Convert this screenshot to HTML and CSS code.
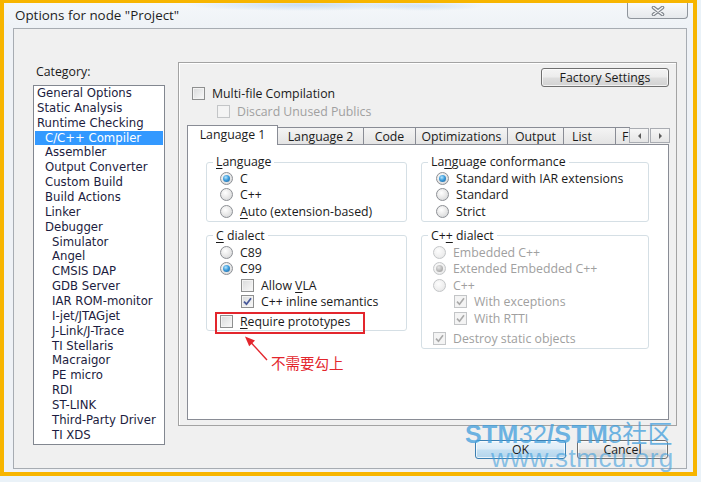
FILE: index.html
```html
<!DOCTYPE html>
<html lang="en">
<head>
  <meta charset="UTF-8" />
  <meta name="viewport" content="width=device-width, initial-scale=1.0"/>
  <title>Options for node "Project"</title>
  <link rel="stylesheet" href="styles.css">
</head>
<body>
  <div class="screen">
    <div class="titlebar">
      <span class="title">Options for node "Project"</span>
      <span class="close-btn">
        <svg width="14" height="10" viewBox="0 0 14 10">
          <path d="M2.5 1.5 L11.5 8.5 M11.5 1.5 L2.5 8.5" stroke="#7f858c" stroke-width="3.6" stroke-linecap="round"/>
          <path d="M2.5 1.5 L11.5 8.5 M11.5 1.5 L2.5 8.5" stroke="#f5f6f7" stroke-width="1.5" stroke-linecap="round"/>
        </svg>
      </span>
    </div>

    <div class="client">
      <!-- category tree -->
      <div class="category">
        <div class="category-label">Category:</div>
        <ul class="category-list">
          <li>General Options</li>
          <li>Static Analysis</li>
          <li>Runtime Checking</li>
          <li class="lvl1 selected">C/C++ Compiler</li>
          <li class="lvl1">Assembler</li>
          <li class="lvl1">Output Converter</li>
          <li class="lvl1">Custom Build</li>
          <li class="lvl1">Build Actions</li>
          <li class="lvl1">Linker</li>
          <li class="lvl1">Debugger</li>
          <li class="lvl2">Simulator</li>
          <li class="lvl2">Angel</li>
          <li class="lvl2">CMSIS DAP</li>
          <li class="lvl2">GDB Server</li>
          <li class="lvl2">IAR ROM-monitor</li>
          <li class="lvl2">I-jet/JTAGjet</li>
          <li class="lvl2">J-Link/J-Trace</li>
          <li class="lvl2">TI Stellaris</li>
          <li class="lvl2">Macraigor</li>
          <li class="lvl2">PE micro</li>
          <li class="lvl2">RDI</li>
          <li class="lvl2">ST-LINK</li>
          <li class="lvl2">Third-Party Driver</li>
          <li class="lvl2">TI XDS</li>
        </ul>
      </div>

      <div class="main">
        <div class="settings-panel">
          <div class="panel-top">
            <span class="btn factory">Factory Settings</span>
          </div>
          <label class="opt multi"><span class="check"></span>Multi-file Compilation</label>
          <label class="opt discard disabled"><span class="check"></span>Discard Unused Publics</label>

          <div class="tabs">
            <span class="tab active w-lang1">Language 1</span>
            <span class="tab w-lang2">Language 2</span>
            <span class="tab w-code">Code</span>
            <span class="tab w-opt">Optimizations</span>
            <span class="tab w-out">Output</span>
            <span class="tab w-list">List</span>
            <span class="tab w-more">F</span>
            <span class="tab-arrows">
              <span class="arrow"><i class="tri left"></i></span>
              <span class="arrow"><i class="tri right"></i></span>
            </span>
          </div>

          <div class="tab-page">
            <div class="col col-left">
              <fieldset class="group g-lang">
                <legend><u>L</u>anguage</legend>
                <label class="opt"><span class="radio on"></span>C</label>
                <label class="opt"><span class="radio"></span>C++</label>
                <label class="opt"><span class="radio"></span><span><u>A</u>uto (extension-based)</span></label>
              </fieldset>

              <fieldset class="group g-cdialect">
                <legend><u>C</u> dialect</legend>
                <label class="opt"><span class="radio"></span>C89</label>
                <label class="opt"><span class="radio on"></span>C99</label>
                <label class="opt ind"><span class="check"></span><span>Allow <u>V</u>LA</span></label>
                <label class="opt ind"><span class="check">
                  <svg width="9" height="9" viewBox="0 0 9 9"><path d="M1 4.6 L3.5 7.2 L8 1.3" fill="none" stroke="#48599a" stroke-width="1.8"/></svg>
                </span>C++ inline semantics</label>
                <label class="opt last"><span class="check"></span><span><u>R</u>equire prototypes</span></label>
                <div class="mark-box"></div>
              </fieldset>
            </div>

            <div class="col col-right">
              <fieldset class="group g-conf">
                <legend>La<u>n</u>guage conformance</legend>
                <label class="opt"><span class="radio on"></span>Standard with IAR extensions</label>
                <label class="opt"><span class="radio"></span>Standard</label>
                <label class="opt"><span class="radio"></span>Strict</label>
              </fieldset>

              <fieldset class="group g-cpp">
                <legend>C+<u>+</u> dialect</legend>
                <label class="opt disabled"><span class="radio"></span>Embedded C++</label>
                <label class="opt disabled"><span class="radio on"></span>Extended Embedded C++</label>
                <label class="opt disabled"><span class="radio"></span>C++</label>
                <label class="opt disabled ind"><span class="check">
                  <svg width="9" height="9" viewBox="0 0 9 9"><path d="M1 4.6 L3.5 7.2 L8 1.3" fill="none" stroke="#a9a9a9" stroke-width="1.6"/></svg>
                </span>With exceptions</label>
                <label class="opt disabled ind"><span class="check">
                  <svg width="9" height="9" viewBox="0 0 9 9"><path d="M1 4.6 L3.5 7.2 L8 1.3" fill="none" stroke="#a9a9a9" stroke-width="1.6"/></svg>
                </span>With RTTI</label>
                <label class="opt disabled last"><span class="check">
                  <svg width="9" height="9" viewBox="0 0 9 9"><path d="M1 4.6 L3.5 7.2 L8 1.3" fill="none" stroke="#a9a9a9" stroke-width="1.6"/></svg>
                </span>Destroy static objects</label>
              </fieldset>
            </div>

            <!-- red hint under the prototypes option -->
            <div class="hint">
              <svg class="hint-arrow" width="32" height="30" viewBox="0 0 32 30">
                <path d="M11 9.5 L27 27" stroke="#e3262d" stroke-width="1.4"/>
                <path d="M5 3.5 L15 7.6 L9.2 13.2 Z" fill="#e3262d"/>
              </svg>
              <span class="hint-text">不需要勾上</span>
            </div>
          </div>
        </div>

        <div class="dialog-buttons">
          <span class="btn default">OK</span>
          <span class="btn">Cancel</span>
        </div>
      </div>
    </div>

    <div class="watermark">
      <div class="wm-name"><b>STM</b>32<b>/STM</b>8社区</div>
      <div class="wm-url">www.stmcu.org</div>
    </div>
  </div>
</body>
</html>
```

FILE: styles.css
```css
* {
  box-sizing: border-box;
}

body {
  margin: 0;
  background: #eaf2f8;
  font-family: "Open Sans", "Noto Sans", sans-serif;
  font-size: 12.3px;
  color: #1a1a1a;
}

u {
  text-decoration-thickness: 1px;
  text-underline-offset: 2px;
}

/* screenshot frame + window chrome */
.screen {
  position: relative;
  width: 697px;
  height: 476px;
  border: 4px solid #f7b500;
  border-top-width: 3px;
  background: #eff2f6;
  display: flex;
  flex-direction: column;
  overflow: hidden;
}

.titlebar {
  height: 25px;
  flex: none;
  display: flex;
  align-items: flex-start;
  background:
    radial-gradient(ellipse 120px 6px at 300px 2px, rgba(150, 190, 230, 0.45), transparent),
    radial-gradient(ellipse 60px 5px at 420px 3px, rgba(150, 190, 230, 0.35), transparent),
    linear-gradient(#f4f7fa, #eef2f6);
}

.title {
  padding-left: 11px;
  line-height: 25px;
  font-size: 13.4px;
  color: #1e1e1e;
}

.close-btn {
  margin-left: auto;
  margin-right: 5px;
  width: 61px;
  height: 16px;
  border: 1px solid #8f959c;
  border-top: none;
  border-radius: 0 0 4px 4px;
  background: linear-gradient(#f9fafb, #e6e9ec);
  display: flex;
  align-items: center;
  justify-content: center;
}

.client {
  flex: 1;
  margin: 0 6px 3px 9px;
  border: 1px solid #a7acb2;
  background: #f0f0f0;
  display: flex;
  padding: 33px 9px 0 19px;
}

/* category tree */
.category {
  width: 132px;
  margin-right: 13px;
}

.category-label {
  height: 23px;
  line-height: 20px;
  padding-left: 3px;
}

.category-list {
  list-style: none;
  margin: 0;
  padding: 0 1px;
  height: 360px;
  border: 1px solid #828790;
  background: #fff;
  font-family: "DejaVu Sans", Verdana, sans-serif;
  font-size: 11.7px;
  color: #1c1c40;
}

.category-list li {
  height: 14.87px;
  line-height: 14.87px;
  padding-left: 2px;
  white-space: nowrap;
}

.category-list .lvl1 {
  padding-left: 10px;
}

.category-list .lvl2 {
  padding-left: 17px;
}

.category-list .selected {
  background: #3399ff;
  color: #fff;
}

/* right side */
.main {
  width: 499px;
  display: flex;
  flex-direction: column;
}

.settings-panel {
  height: 364px;
  border: 1px solid #a3a3a3;
  box-shadow: inset 1px 1px 0 #fff;
  padding: 5px 7px 5px 8px;
  display: flex;
  flex-direction: column;
}

.panel-top {
  display: flex;
  justify-content: flex-end;
  height: 19px;
  margin-bottom: -3px;
}

.btn {
  display: flex;
  align-items: center;
  justify-content: center;
  height: 19px;
  border: 1px solid #707070;
  border-radius: 3px;
  background: linear-gradient(#f4f4f4 0%, #ececec 48%, #dedede 52%, #d2d2d2 100%);
  box-shadow: inset 0 0 0 1px rgba(255, 255, 255, 0.7);
  color: #1a1a1a;
}

.factory {
  width: 128px;
}

.opt {
  display: flex;
  align-items: center;
  height: 16.6px;
  gap: 7px;
  white-space: nowrap;
}

.opt.disabled {
  color: #a0a0a0;
}

.multi {
  height: 18px;
  margin-left: 5px;
}

.discard {
  height: 18px;
  margin-left: 30px;
}

/* win7 style check box and radio */
.check {
  width: 13px;
  height: 13px;
  flex: none;
  border: 1px solid #8e8f8f;
  background: linear-gradient(135deg, #d9dadb, #f9f9f9);
  box-shadow: inset 0 0 0 1px #f3f3f3;
  display: flex;
  align-items: center;
  justify-content: center;
}

.disabled .check {
  border-color: #c3c5c7;
  background: #f4f4f4;
}

.radio {
  width: 13px;
  height: 13px;
  flex: none;
  border-radius: 50%;
  border: 1px solid #8d9095;
  background: radial-gradient(circle at 40% 35%, #ffffff 0%, #e8e8e8 50%, #cdd0d3 100%);
  display: flex;
  align-items: center;
  justify-content: center;
}

.radio.on::after {
  content: "";
  width: 7px;
  height: 7px;
  border-radius: 50%;
  background: radial-gradient(circle at 40% 35%, #b7e5fc 0%, #3d9ddc 45%, #185a94 100%);
}

.disabled .radio {
  border-color: #c4c6c8;
  background: radial-gradient(circle at 40% 35%, #fdfdfd 0%, #eeeeee 60%, #dedfe0 100%);
}

.disabled .radio.on::after {
  background: radial-gradient(circle at 40% 35%, #e6e6e6 0%, #b2b2b2 60%, #9a9a9a 100%);
}

/* tab strip */
.tabs {
  display: flex;
  align-items: flex-end;
  height: 20px;
  margin-top: 5px;
  margin-bottom: -1px;
  position: relative;
  z-index: 1;
}

.tab {
  height: 18px;
  margin-right: -1px;
  border: 1px solid #898c95;
  background: linear-gradient(#f4f4f4, #e4e4e4);
  display: flex;
  align-items: center;
  justify-content: center;
  white-space: nowrap;
  overflow: hidden;
}

.tab.active {
  height: 20px;
  background: #fff;
  border-bottom: none;
  padding-bottom: 2px;
}

.w-lang1 { width: 91px; }
.w-lang2 { width: 87px; }
.w-code { width: 53px; }
.w-opt { width: 93px; }
.w-out { width: 57px; }
.w-list { width: 53px; justify-content: flex-start; padding-left: 8px; }
.w-more { width: 15px; justify-content: flex-start; padding-left: 6px; border-right: none; }

.tab-arrows {
  display: flex;
  gap: 1px;
  margin-bottom: 2px;
  margin-right: -1px;
}

.arrow {
  width: 20px;
  height: 15px;
  border: 1px solid #a9acb2;
  background: linear-gradient(#f6f6f6, #e5e5e5);
  display: flex;
  align-items: center;
  justify-content: center;
}

.tri {
  width: 0;
  height: 0;
  border-top: 3px solid transparent;
  border-bottom: 3px solid transparent;
}

.tri.left {
  border-right: 3px solid #5a5a5a;
}

.tri.right {
  border-left: 3px solid #5a5a5a;
}

.tab-page {
  flex: 1;
  position: relative;
  background: #fff;
  border: 1px solid #898c95;
  display: flex;
  gap: 14px;
  padding: 10px 0 0 18px;
}

.col {
  display: flex;
  flex-direction: column;
  gap: 7px;
}

.col-left {
  width: 201px;
}

.col-right {
  width: 228px;
}

.group {
  position: relative;
  margin: 0;
  padding: 1px 0 1px 0;
  border: 1px solid #d5dfe5;
  border-radius: 3px;
}

.group legend {
  margin-left: 6px;
  padding: 0 3px;
  line-height: 14px;
  color: #1a1a1a;
}

.g-lang .opt { padding-left: 13px; }
.g-cdialect { padding-bottom: 0; }
.g-cdialect .opt { padding-left: 13px; }
.g-cdialect .opt.ind { padding-left: 34px; }
.g-conf .opt { padding-left: 14px; }
.g-cpp .opt { padding-left: 11px; }
.g-cpp .opt.ind { padding-left: 32px; }
.group .opt.last { margin-top: 3.4px; }

.mark-box {
  position: absolute;
  left: 8px;
  top: 69px;
  width: 150px;
  height: 22px;
  border: 2px solid #e3262d;
}

.hint {
  position: absolute;
  left: 52px;
  top: 188px;
  display: flex;
  align-items: flex-end;
}

.hint-text {
  margin-left: -1px;
  margin-bottom: -8px;
  font-family: "Noto Sans CJK SC", sans-serif;
  font-size: 14.5px;
  line-height: 16px;
  color: #e3262d;
}

/* OK / Cancel */
.dialog-buttons {
  display: flex;
  justify-content: flex-end;
  gap: 11px;
  margin-top: 14px;
  padding-right: 9px;
}

.dialog-buttons .btn {
  width: 91px;
}

.btn.default {
  border-color: #3c7fb1;
  background: linear-gradient(#eaf4fb 0%, #dcecf7 48%, #c5e0f2 52%, #b3d5ec 100%);
}

/* site watermark printed over the picture */
.watermark {
  position: absolute;
  left: 461px;
  top: 418px;
  color: rgba(64, 158, 220, 0.75);
  font-family: "Liberation Sans", Arial, "Noto Sans CJK SC", sans-serif;
  pointer-events: none;
}

.wm-name {
  font-size: 25px;
  line-height: 26px;
  letter-spacing: 0.3px;
  white-space: nowrap;
}

.wm-name b {
  font-weight: 700;
}

.wm-url {
  margin-left: 26px;
  margin-top: -2px;
  font-size: 26px;
  line-height: 26px;
  color: rgba(64, 158, 220, 0.6);
  letter-spacing: 0.5px;
}
```
